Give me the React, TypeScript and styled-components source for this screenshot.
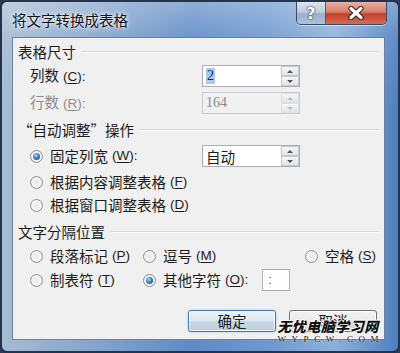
import React from "react";
import styled, { createGlobalStyle, css } from "styled-components";

const GlobalStyle = createGlobalStyle`
  html, body {
    margin: 0;
    padding: 0;
    background: #2c3b52;
  }
  body {
    font-family: "Noto Sans CJK SC", "Noto Sans", sans-serif;
  }
`;

const cjk = `"Noto Sans CJK SC", "Noto Sans", sans-serif`;

const Window = styled.div`
  position: relative;
  box-sizing: border-box;
  width: 400px;
  height: 353px;
  border: 2px solid #24344c;
  border-radius: 7px;
  display: flex;
  flex-direction: column;
  overflow: hidden;
  background:
    linear-gradient(180deg, rgba(255, 255, 255, 0.3) 0%, rgba(255, 255, 255, 0.1) 10%, rgba(255, 255, 255, 0) 30%),
    linear-gradient(90deg, #a6bbd3 0%, #86a6cc 22%, #5f8ac6 48%, #6e98cf 68%, #8fb1da 84%, #4f7fc0 100%);
`;

const TitleBar = styled.div`
  height: 35px;
  flex: none;
  display: flex;
  align-items: flex-start;
  justify-content: space-between;
  padding: 0 11px 0 10px;
`;

const Title = styled.div`
  margin-top: 9px;
  font-family: ${cjk};
  font-size: 14.5px;
  line-height: 18px;
  color: #141414;
  text-shadow: 0 0 6px rgba(255, 255, 255, 0.95), 0 0 3px rgba(255, 255, 255, 0.9);
`;

const CaptionButtons = styled.div`
  display: flex;
  border: 1px solid #3a4a62;
  border-top: none;
  border-radius: 0 0 5px 5px;
  overflow: hidden;
  box-shadow: 0 1px 0 rgba(255, 255, 255, 0.55);
`;

const CaptionButton = styled.div<{ $close?: boolean }>`
  width: ${(p) => (p.$close ? 60 : 28)}px;
  height: 22px;
  display: flex;
  align-items: center;
  justify-content: center;
  color: #fff;
  font: bold 16px "DejaVu Sans", sans-serif;
  text-shadow: 0 0 2px #2a3040, 0 0 1px #2a3040;
  background: ${(p) =>
    p.$close
      ? "linear-gradient(180deg, #eab0a2 0%, #d6806c 45%, #c2402c 55%, #d66c54 100%)"
      : "linear-gradient(180deg, #dde6f1 0%, #bccbde 45%, #9bb0c9 55%, #adc3dc 100%)"};
  & + & {
    border-left: 1px solid #4a5a72;
  }
`;

const Client = styled.div`
  flex: 1;
  margin: 0 13px 11px 10px;
  border: 1px solid #6b819d;
  background: #f0f0f0;
  display: flex;
  flex-direction: column;
  font-family: ${cjk};
  font-size: 14.5px;
  color: #1c1c1c;
`;

const GroupHeader = styled.div<{ $top: number }>`
  display: flex;
  align-items: center;
  height: 20px;
  margin-top: ${(p) => p.$top}px;
  padding: 0 5px;
  line-height: 20px;
  &::after {
    content: "";
    flex: 1;
    height: 0;
    margin-left: 6px;
    border-top: 1px solid #d3d8de;
    border-bottom: 1px solid #fafafa;
  }
`;

const FieldRow = styled.div<{ $top: number }>`
  display: grid;
  grid-template-columns: 172px 98px;
  align-items: center;
  height: 22px;
  margin-top: ${(p) => p.$top}px;
  padding-left: 17px;
`;

const Label = styled.span<{ $disabled?: boolean }>`
  line-height: 20px;
  white-space: nowrap;
  color: ${(p) => (p.$disabled ? "#8c8c8c" : "#1c1c1c")};
`;

// access key like (C), set in a latin face so the brackets stay narrow
const Mnemonic = styled.span`
  margin-left: 4px;
  font-family: "Liberation Sans", "DejaVu Sans", sans-serif;
  font-size: 13.5px;
  u {
    text-underline-offset: 2px;
  }
`;

const SpinBox = styled.div<{ $disabled?: boolean }>`
  display: flex;
  box-sizing: border-box;
  height: 22px;
  border: 1px solid ${(p) => (p.$disabled ? "#c9cdd3" : "#abadb3")};
  background: ${(p) => (p.$disabled ? "#f0f0f0" : "#fff")};
`;

const SpinValue = styled.div<{ $disabled?: boolean; $cjk?: boolean }>`
  flex: 1;
  display: flex;
  align-items: center;
  padding-left: 3px;
  font-family: ${(p) => (p.$cjk ? cjk : `"Liberation Serif", serif`)};
  font-size: ${(p) => (p.$cjk ? "14.5px" : "14px")};
  color: ${(p) => (p.$disabled ? "#8a8a8a" : "#1c1c1c")};
`;

const Selected = styled.span`
  background: #a9c9ef;
  color: #0b2a6e;
  padding: 0 1px;
  line-height: 16px;
`;

const SpinButtons = styled.div`
  width: 18px;
  display: flex;
  flex-direction: column;
`;

const SpinButton = styled.div<{ $down?: boolean; $disabled?: boolean }>`
  flex: 1;
  display: flex;
  align-items: center;
  justify-content: center;
  box-sizing: border-box;
  border: 1px solid ${(p) => (p.$disabled ? "#dcdfe3" : "#c5c9cf")};
  background: linear-gradient(180deg, #f6f6f6 0%, #e4e4e4 100%);
  &::after {
    content: "";
    width: 0;
    height: 0;
    border-left: 3px solid transparent;
    border-right: 3px solid transparent;
    ${(p) =>
      p.$down
        ? css`border-top: 3px solid ${p.$disabled ? "#b8bcc2" : "#4a5568"};`
        : css`border-bottom: 3px solid ${p.$disabled ? "#b8bcc2" : "#4a5568"};`}
  }
`;

const Choice = styled.label`
  display: flex;
  align-items: center;
  white-space: nowrap;
  line-height: 20px;
`;

const Radio = styled.span<{ $checked?: boolean }>`
  position: relative;
  flex: none;
  box-sizing: border-box;
  width: 13px;
  height: 13px;
  margin-right: 7px;
  border-radius: 50%;
  border: 1px solid #8d9196;
  background: radial-gradient(circle at 50% 50%, #e6e6e6 0%, #f6f6f6 55%, #d4d6d8 100%);
  ${(p) =>
    p.$checked &&
    css`
      &::after {
        content: "";
        position: absolute;
        left: 2px;
        top: 2px;
        width: 7px;
        height: 7px;
        border-radius: 50%;
        background: radial-gradient(circle at 40% 35%, #a6dcfa 0%, #2f7cbf 50%, #0e4a82 100%);
      }
    `}
`;

const RadioRow = styled.div<{ $top: number }>`
  display: flex;
  align-items: center;
  height: 22px;
  margin-top: ${(p) => p.$top}px;
  padding-left: 17px;
`;

const SeparatorGrid = styled.div<{ $top: number }>`
  display: grid;
  grid-template-columns: 113px 162px auto;
  align-items: center;
  height: 22px;
  margin-top: ${(p) => p.$top}px;
  padding-left: 17px;
`;

const CharBox = styled.div`
  box-sizing: border-box;
  width: 28px;
  height: 22px;
  margin-left: 14px;
  padding-left: 5px;
  border: 1px solid #abadb3;
  background: #fff;
  color: #555;
  line-height: 19px;
  font-family: "Liberation Sans", sans-serif;
  font-size: 13px;
`;

const ButtonRow = styled.div`
  display: flex;
  justify-content: flex-end;
  gap: 13px;
  margin-top: 19px;
  padding-right: 7px;
`;

const Button = styled.button<{ $default?: boolean }>`
  width: 88px;
  height: 22px;
  padding: 0;
  border-radius: 3px;
  font-family: ${cjk};
  font-size: 14.5px;
  line-height: 18px;
  color: #1c1c1c;
  border: 1px solid ${(p) => (p.$default ? "#3c7fb1" : "#707070")};
  background: ${(p) =>
    p.$default
      ? "linear-gradient(180deg, #eaf1f7 0%, #dde8f0 49%, #c9d9e6 50%, #bed1e0 100%)"
      : "linear-gradient(180deg, #f2f2f2 0%, #ebebeb 49%, #dddddd 50%, #cfcfcf 100%)"};
  box-shadow: inset 0 0 0 1px rgba(255, 255, 255, 0.7)
    ${(p) => (p.$default ? ", 0 0 2px #78bde8" : "")};
`;

const Watermark = styled.div`
  position: absolute;
  left: 275px;
  top: 317px;
  width: 102px;
  display: flex;
  flex-direction: column;
  align-items: center;
  pointer-events: none;
`;

const WatermarkName = styled.div`
  font-family: ${cjk};
  font-weight: 900;
  font-style: italic;
  font-size: 14px;
  line-height: 15px;
  letter-spacing: 0.5px;
  color: #111;
  text-shadow: 1px 0 0 #fff, -1px 0 0 #fff, 0 1px 0 #fff, 0 -1px 0 #fff;
`;

const WatermarkUrl = styled.div`
  font-family: "Liberation Serif", serif;
  font-size: 9px;
  line-height: 10px;
  letter-spacing: 5.6px;
  margin-right: -5.6px;
  color: #222;
  text-shadow: 0 0 2px #fff;
`;

function Spin({ value, disabled, selected, isText }: { value: string; disabled?: boolean; selected?: boolean; isText?: boolean }) {
  return (
    <SpinBox $disabled={disabled}>
      <SpinValue $disabled={disabled} $cjk={isText}>
        {selected ? <Selected>{value}</Selected> : value}
      </SpinValue>
      <SpinButtons>
        <SpinButton $disabled={disabled} />
        <SpinButton $down $disabled={disabled} />
      </SpinButtons>
    </SpinBox>
  );
}

function Key({ k, colon }: { k: string; colon?: boolean }) {
  return (
    <Mnemonic>
      (<u>{k}</u>){colon ? ":" : ""}
    </Mnemonic>
  );
}

function CloseGlyph() {
  return (
    <svg width="18" height="14" viewBox="0 0 18 14">
      <path d="M4 2.5 L14 11.5 M14 2.5 L4 11.5" stroke="#3a2a2a" strokeWidth="5.5" strokeLinecap="round" />
      <path d="M4 2.5 L14 11.5 M14 2.5 L4 11.5" stroke="#fff" strokeWidth="3.2" strokeLinecap="round" />
    </svg>
  );
}

export default function App() {
  return (
    <>
      <GlobalStyle />
      <Window>
        <TitleBar>
          <Title>将文字转换成表格</Title>
          <CaptionButtons>
            <CaptionButton>?</CaptionButton>
            <CaptionButton $close>
              <CloseGlyph />
            </CaptionButton>
          </CaptionButtons>
        </TitleBar>
        <Client>
          <GroupHeader $top={4}>表格尺寸</GroupHeader>
          <FieldRow $top={3}>
            <Label>
              列数<Key k="C" colon />
            </Label>
            <Spin value="2" selected />
          </FieldRow>
          <FieldRow $top={5}>
            <Label $disabled>
              行数<Key k="R" colon />
            </Label>
            <Spin value="164" disabled />
          </FieldRow>

          <GroupHeader $top={6}>“自动调整”操作</GroupHeader>
          <FieldRow $top={5}>
            <Choice>
              <Radio $checked />
              固定列宽<Key k="W" colon />
            </Choice>
            <Spin value="自动" isText />
          </FieldRow>
          <RadioRow $top={4}>
            <Choice>
              <Radio />
              根据内容调整表格<Key k="F" />
            </Choice>
          </RadioRow>
          <RadioRow $top={1}>
            <Choice>
              <Radio />
              根据窗口调整表格<Key k="D" />
            </Choice>
          </RadioRow>

          <GroupHeader $top={6}>文字分隔位置</GroupHeader>
          <SeparatorGrid $top={3}>
            <Choice>
              <Radio />
              段落标记<Key k="P" />
            </Choice>
            <Choice>
              <Radio />
              逗号<Key k="M" />
            </Choice>
            <Choice>
              <Radio />
              空格<Key k="S" />
            </Choice>
          </SeparatorGrid>
          <SeparatorGrid $top={2}>
            <Choice>
              <Radio />
              制表符<Key k="T" />
            </Choice>
            <Choice>
              <Radio $checked />
              其他字符<Key k="O" colon />
              <CharBox>:</CharBox>
            </Choice>
          </SeparatorGrid>

          <ButtonRow>
            <Button $default>确定</Button>
            <Button>取消</Button>
          </ButtonRow>
        </Client>
        <Watermark>
          <WatermarkName>无忧电脑学习网</WatermarkName>
          <WatermarkUrl>WYPCW.COM</WatermarkUrl>
        </Watermark>
      </Window>
    </>
  );
}
